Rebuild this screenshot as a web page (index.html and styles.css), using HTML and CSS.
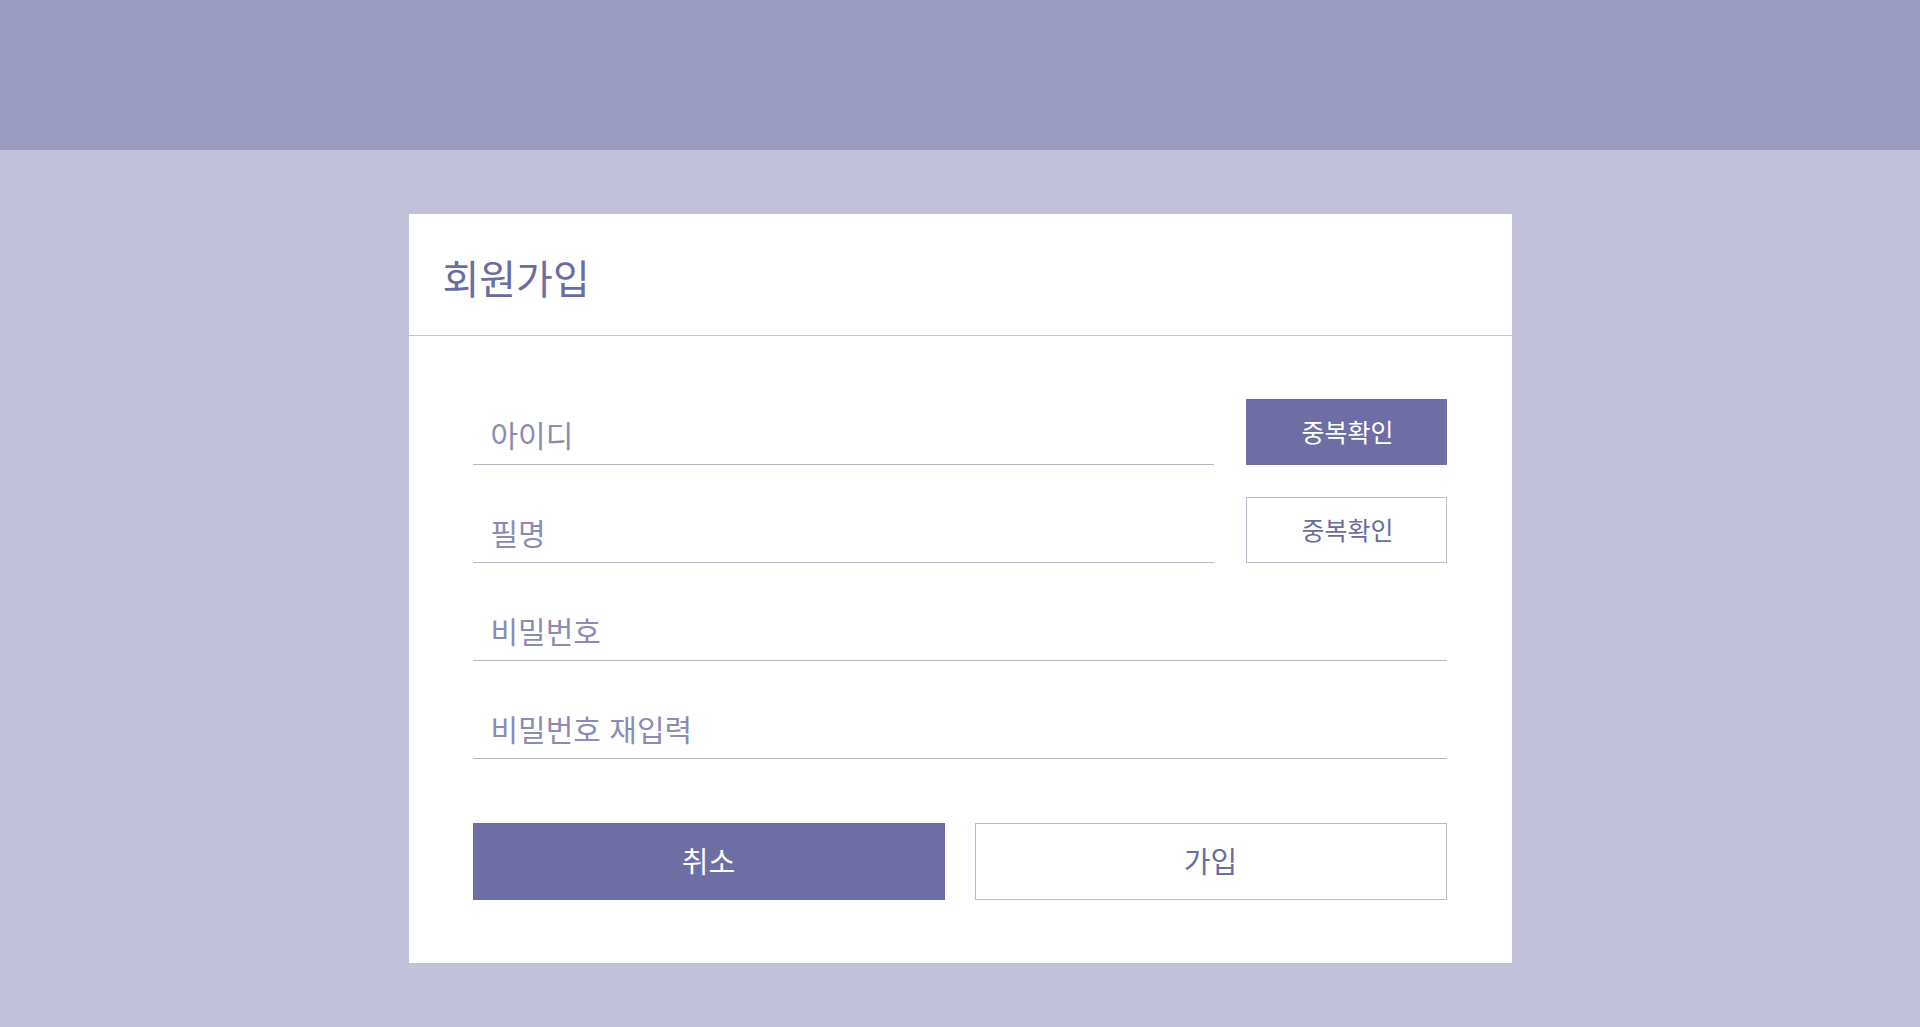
FILE: index.html
```html
<!DOCTYPE html>
<html lang="ko">
<head>
<meta charset="utf-8">
<title>회원가입</title>
<link rel="stylesheet" href="styles.css">
</head>
<body>
<header class="topbar"></header>
<main class="page">
  <section class="card">
    <div class="card-head">
      <h1 class="card-title">회원가입</h1>
    </div>
    <form class="card-body">
      <div class="row">
        <input class="field" type="text" placeholder="아이디">
        <button type="button" class="btn-check btn-check--filled">중복확인</button>
      </div>
      <div class="row">
        <input class="field" type="text" placeholder="필명">
        <button type="button" class="btn-check">중복확인</button>
      </div>
      <div class="row">
        <input class="field" type="password" placeholder="비밀번호">
      </div>
      <div class="row">
        <input class="field" type="password" placeholder="비밀번호 재입력">
      </div>
      <div class="actions">
        <button type="button" class="btn btn--filled">취소</button>
        <button type="submit" class="btn">가입</button>
      </div>
    </form>
  </section>
</main>
</body>
</html>
```

FILE: styles.css
```css
* { box-sizing: border-box; }
html, body { margin: 0; padding: 0; }
body {
  background: #c1c1da;
  font-family: "Noto Sans CJK KR", "Noto Sans", sans-serif;
  min-height: 1027px;
}
.topbar {
  height: 150px;
  background: #9a9bc0;
}
.page {
  padding-top: 64px;
  display: flex;
  justify-content: center;
}
.card {
  width: 1103px;
  height: 749px;
  background: #ffffff;
}
.card-head {
  height: 122px;
  border-bottom: 1px solid #c4c4cc;
  display: flex;
  align-items: center;
  padding-left: 34px;
}
.card-title {
  margin: 0;
  font-size: 40px;
  font-weight: 400;
  color: #6b6ca1;
  line-height: 1;
  padding-top: 4px;
}
.card-body {
  padding: 63px 65px 64px 64px;
  display: flex;
  flex-direction: column;
  gap: 32px;
}
.row {
  display: flex;
  gap: 32px;
  height: 66px;
}
.field {
  flex: 1;
  min-width: 0;
  height: 66px;
  border: 0;
  border-bottom: 1px solid #b6b6c6;
  outline: none;
  padding: 4px 18px 0;
  font-family: inherit;
  font-size: 30px;
  color: #6b6ca1;
  background: transparent;
}
.field::placeholder {
  color: #8b8bb6;
  opacity: 1;
}
.btn-check {
  width: 201px;
  height: 66px;
  flex: none;
  border: 1px solid #b9b9c9;
  background: #ffffff;
  color: #6b6ca1;
  font-family: inherit;
  font-size: 25px;
  padding: 0 0 2px 3px;
  cursor: pointer;
}
.btn-check--filled {
  background: #6d6ea4;
  border-color: #6d6ea4;
  color: #ffffff;
}
.actions {
  display: flex;
  gap: 30px;
  margin-top: 32px;
}
.btn {
  flex: 1;
  height: 77px;
  border: 1px solid #b9b9c9;
  background: #ffffff;
  color: #6b6ca1;
  font-family: inherit;
  font-size: 29px;
  padding: 0 0 4px;
  cursor: pointer;
}
.btn--filled {
  background: #6d6ea4;
  border-color: #6d6ea4;
  color: #ffffff;
}
```
